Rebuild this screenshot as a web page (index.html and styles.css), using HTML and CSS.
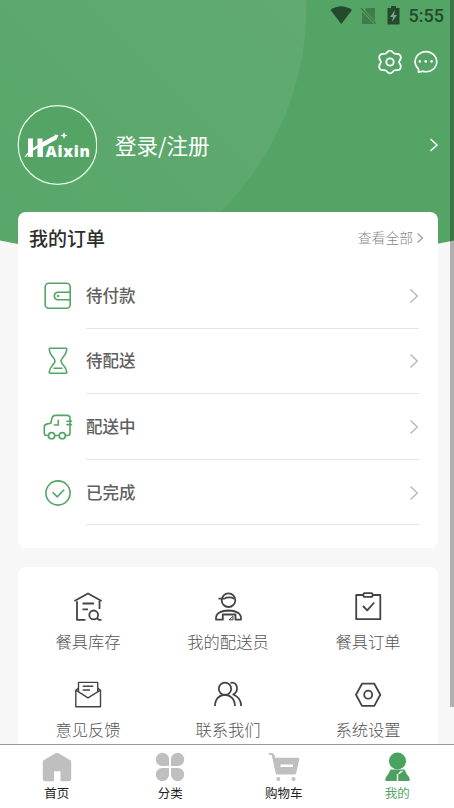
FILE: index.html
```html
<!DOCTYPE html>
<html lang="zh-CN">
<head>
<meta charset="utf-8">
<title>我的</title>
<link rel="stylesheet" href="styles.css">
</head>
<body>
<div class="screen">
  <svg class="backdrop" width="454" height="260" viewBox="0 0 454 260">
    <defs>
      <linearGradient id="glow" x1="0" y1="1" x2="1" y2="0"><stop offset="0.2" stop-color="#fff" stop-opacity="0.02"/><stop offset="1" stop-color="#fff" stop-opacity="0.1"/></linearGradient>
      <clipPath id="dome"><path d="M0 0H454V240.500Q227 290 0 240.500Z"/></clipPath>
    </defs>
    <g clip-path="url(#dome)">
      <rect width="454" height="260" fill="#54a465"/>
      <circle cx="17" cy="6" r="289.500" fill="url(#glow)"/>
    </g>
  </svg>
  <main class="content">
    <header class="status">
      <svg width="23" height="19" viewBox="0 0 23 19"><path d="M.5 4Q11 -3.500 22 4L11.300 18Z" fill="#24492d"/></svg>
      <svg class="sim" width="17" height="18" viewBox="0 0 17 18"><path d="M6 1H15V14L5 3ZM2 5L14 17H2Z" fill="#3d7d4b"/><path d="M1 1L16 17" stroke="#3d7d4b" stroke-width="1.400"/></svg>
      <svg class="battery" width="13" height="19" viewBox="0 0 13 19"><path d="M4 0H9V2H12.500V18.500H.5V2H4Z" fill="#24492d"/><path d="M8 4L3 11H6L5 16L10 9H7Z" fill="#6fae7c"/></svg>
      <span class="clock">5:55</span>
    </header>
    <div class="tools">
      <svg width="24" height="26" viewBox="0 0 24 26" fill="none" stroke="#fff" stroke-width="1.800" stroke-linejoin="round"><path d="M9.200 3.200Q12 .2 14.800 3.200Q16.200 5.200 18.600 4.800Q22.600 4.600 22.800 8.500Q22.800 10.400 21.600 11.500Q20.500 13 21.600 14.500Q22.800 15.600 22.800 17.500Q22.600 21.400 18.600 21.200Q16.200 20.800 14.800 22.800Q12 25.800 9.200 22.800Q7.800 20.800 5.400 21.200Q1.400 21.400 1.200 17.500Q1.200 15.600 2.400 14.500Q3.500 13 2.400 11.500Q1.200 10.400 1.200 8.500Q1.400 4.600 5.400 4.800Q7.800 5.200 9.200 3.200Z"/><circle cx="12" cy="13" r="3.700"/></svg>
      <svg width="25" height="24" viewBox="0 0 25 24" fill="none" stroke="#fff" stroke-width="1.600" stroke-linejoin="round"><path d="M5.500 22.300V19A10.800 10 0 1 1 10.200 21.400Q8 21.300 5.500 22.300Z"/><g fill="#fff" stroke="none"><circle cx="6.800" cy="11.400" r="1.300"/><circle cx="12.700" cy="11.400" r="1.300"/><circle cx="18.600" cy="11.400" r="1.300"/></g></svg>
    </div>
    <section class="account">
      <div class="avatar">
        <svg width="80" height="80" viewBox="0 0 80 80"><circle cx="40.500" cy="40" r="39.300" fill="#54a465" stroke="#e9ffea" stroke-width="1.200"/><g fill="#fff"><path d="M11 33.500H16V52H11ZM20.500 33.500H25.500V37L38 30.500L37 29.500L41.500 30L39.500 34.500L26 42V52H20.500V43Q13 47 9 52H7.500Q11 46 20.500 40Z"/><path d="M47 27L48 29.500L50.500 30.500L48 31.500L47 34L46 31.500L43.500 30.500L46 29.500Z"/></g><text class="brand" x="28.500" y="52" textLength="44.500" lengthAdjust="spacing">Aixin</text></svg>
      </div>
      <span class="login">登录/注册</span>
      <svg width="10" height="16" viewBox="0 0 10 16" fill="none" stroke="#fff" stroke-width="1.500"><path d="M1.500 2L8 8L1.500 14"/></svg>
    </section>
    <section class="card orders">
      <div class="heading"><h1>我的订单</h1><span class="all">查看全部</span><svg width="8" height="12" viewBox="0 0 8 12" fill="none" stroke="#999" stroke-width="1.200"><path d="M1.500 1.500L6.500 6L1.500 10.500"/></svg></div>
      <div class="row">
        <svg class="glyph" width="30" height="30" viewBox="0 0 30 30"><rect x="2.200" y="2.200" width="25" height="25" rx="3.500"/><path d="M27 11.300H14.500A3.800 3.800 0 0 0 14.500 18.800H27"/><circle cx="15" cy="15" r=".5"/></svg>
        <div class="line"><span>待付款</span><svg width="10" height="16" viewBox="0 0 10 16"><path d="M1.500 1.500L8.300 8L1.500 14.500"/></svg></div>
      </div>
      <div class="row">
        <svg class="glyph" width="30" height="30" viewBox="0 0 30 30"><path d="M7 2.300H23Q24 2.300 23.700 4C23.200 10 18 11.500 18 15C18 18.500 23.200 20 23.700 26Q24 27.200 23 27.200H7Q6 27.200 6.300 26C6.800 20 12 18.500 12 15C12 11.500 6.800 10 6.300 4Q6 2.300 7 2.300ZM11 22.200H19"/></svg>
        <div class="line"><span>待配送</span><svg width="10" height="16" viewBox="0 0 10 16"><path d="M1.500 1.500L8.300 8L1.500 14.500"/></svg></div>
      </div>
      <div class="row">
        <svg class="glyph" width="30" height="30" viewBox="0 0 30 30"><path d="M5.500 23.500H3.500Q1.300 23.500 1.300 21.300V15Q1.300 12.700 3.700 12.100L7.700 11.300L9 6Q9.900 3.400 12.400 3.400H24Q27 3.400 27 6.200V21Q27 23.500 24.700 23.500H22.400M11.800 23.500H16.200M15.300 8.200V13H11.500M24 9.300H28.500M24 12.600H28.500"/><circle cx="8.600" cy="23.700" r="3.100"/><circle cx="19.300" cy="23.700" r="3.100"/></svg>
        <div class="line"><span>配送中</span><svg width="10" height="16" viewBox="0 0 10 16"><path d="M1.500 1.500L8.300 8L1.500 14.500"/></svg></div>
      </div>
      <div class="row">
        <svg class="glyph" width="30" height="30" viewBox="0 0 30 30"><circle cx="15" cy="15" r="12.100"/><path d="M10 14.700L14.300 18.800L20.800 12"/></svg>
        <div class="line"><span>已完成</span><svg width="10" height="16" viewBox="0 0 10 16"><path d="M1.500 1.500L8.300 8L1.500 14.500"/></svg></div>
      </div>
    </section>
    <section class="card services">
      <div class="service"><svg width="30" height="30" viewBox="0 0 30 30"><path d="M12.500 27.800H4V9.200M1.400 9L15 1.500L28.600 9M26.500 9V17M9.500 11.500H21M9.500 17.300H15M23.800 26.300L26 27.800H28.500"/><circle cx="20.700" cy="22.900" r="4.400"/></svg><span>餐具库存</span></div>
      <div class="service"><svg width="30" height="30" viewBox="0 0 30 30"><circle cx="15.500" cy="8.200" r="6.800"/><path d="M5.500 6.700H11Q16 4 21.300 6.700M3 27.700Q2 19 15.500 18.500Q29 19 28 27.700H22.500V22.500H9.800V27.700Z"/><path stroke-width="1" d="M16 27.800L20 24.300V27.800Z"/></svg><span>我的配送员</span></div>
      <div class="service"><svg width="30" height="30" viewBox="0 0 30 30"><path d="M10.500 3H3.200V27.200H27.300V3H19.500M10 14L14.200 18.300L21.200 10.500"/><rect x="10.500" y="1.200" width="9" height="3.700" rx="1"/></svg><span>餐具订单</span></div>
      <div class="service"><svg class="thin" width="30" height="30" viewBox="0 0 30 30"><path d="M5.500 8L2.800 10.200V26.800H27.500V10.200L24.700 8M2.800 10.200L15 17.800L27.500 10.200M5.500 11.500V2.400H24.700V11.500M9.700 6.300H20.300M9.700 10H17"/></svg><span>意见反馈</span></div>
      <div class="service"><svg width="30" height="30" viewBox="0 0 30 30"><circle cx="12" cy="8.800" r="6.200"/><path d="M2 26C2 11 21.700 11 22 26M17.500 2.800C24.500 1.300 26.500 11 20.200 14.500Q28 17.300 28.200 26"/></svg><span>联系我们</span></div>
      <div class="service"><svg width="30" height="30" viewBox="0 0 30 30"><path d="M9 3.700H21.300L27.300 14.700L21.300 25.900H9L3 14.700Z"/><circle cx="15.200" cy="14.700" r="4"/></svg><span>系统设置</span></div>
    </section>
  </main>
  <nav class="tabs">
    <div class="tab"><svg width="30" height="30" viewBox="0 0 30 30"><path d="M13.500 1.300Q15 .4 16.500 1.300L28 8Q29.200 8.800 29.200 10V27Q29.200 29.300 27 29.300H18.500V19.300H12V29.300H3Q.8 29.300 .8 27V10Q.8 8.800 2 8Z"/></svg><span>首页</span></div>
    <div class="tab"><svg width="30" height="30" viewBox="0 0 30 30"><path d="M14 14H7A6.600 6.600 0 1 1 14 7ZM16 14V7A6.600 6.600 0 1 1 23 14ZM14 16V23A6.600 6.600 0 1 1 7 16ZM16 16H23A6.600 6.600 0 1 1 16 23Z"/></svg><span>分类</span></div>
    <div class="tab cart"><svg width="32" height="30" viewBox="0 0 32 30"><path fill-rule="evenodd" d="M.8 1H4Q6 1 6.700 3.500L7.200 5.800H30Q31.500 5.800 31.200 7.500L28.300 21Q27.900 22.500 26.300 22.500H9.500Q8 22.500 7.600 21L4 4.200Q3.800 2.800 2.500 2.800H.8ZM12.500 12.500V15H25V12.500Z"/><circle cx="10.300" cy="27" r="2"/><circle cx="25.500" cy="27" r="2"/></svg><span>购物车</span></div>
    <div class="tab active"><svg width="30" height="30" viewBox="0 0 30 30"><circle cx="15.500" cy="9" r="8.500"/><path d="M8 18L13.200 19.500L14.800 22V29H4.500Q2.700 29 3.200 27.300Q3.800 24.800 6 22.500Q7.500 20.500 8 18ZM23 18L17.800 19.500L16.200 22V29H26.500Q28.300 29 27.800 27.300Q27.200 24.800 25 22.500Q23.500 20.500 23 18ZM8 17.500H23L17.500 22H13.500Z"/></svg><span>我的</span></div>
  </nav>
  <div class="scrollbar"></div>
</div>
</body>
</html>
```
FILE: styles.css
```css
* { box-sizing: border-box; }
body { margin: 0; font-family: "Noto Sans CJK SC", sans-serif; color: #555; }
svg { display: block; flex: none; }
.screen { position: relative; width: 454px; height: 808px; overflow: hidden; display: flex; flex-direction: column; background: #f7f7f7; }
.backdrop { position: absolute; top: 0; left: 0; }
.content { position: relative; flex: 1; min-height: 0; overflow: hidden; }
.status { height: 31px; padding: 0 10px 0 0; display: flex; justify-content: flex-end; align-items: center; }
.sim { margin-left: 7px; }
.battery { margin-left: 10px; }
.clock { margin-left: 9px; font: 500 18px/20px Roboto, sans-serif; color: #24492d; }
.tools { height: 62px; padding-right: 16px; display: flex; justify-content: flex-end; align-items: center; gap: 11px; }
.account { height: 103px; padding: 0 15px 0 17px; display: flex; align-items: center; }
.brand { font: 800 15.500px "Open Sans", sans-serif; fill: #fff; }
.login { flex: 1; margin-left: 18px; font-size: 21.5px; line-height: 30px; color: #fff; }
.card { margin: 0 16px 0 18px; background: #fff; border-radius: 8px; }
.orders { height: 336px; margin-top: 16px; }
.heading { height: 51px; padding: 1px 14px 0 11px; display: flex; align-items: center; }
h1 { flex: 1; margin: 0; font-size: 19px; font-weight: 500; line-height: 26px; color: #2d2d2d; }
.all { margin: -2px 3px 0 0; font-size: 13.8px; font-weight: 300; color: #888; }
.row { height: 65.6px; padding-left: 25px; display: flex; align-items: center; }
.glyph { fill: none; stroke: #54a465; stroke-width: 1.600; stroke-linecap: round; stroke-linejoin: round; }
.line { flex: 1; height: 100%; margin: 0 19px 0 13px; padding-top: 1px; border-bottom: 1px solid #e5e5e5; display: flex; align-items: center; justify-content: space-between; font-size: 16.5px; font-weight: 500; color: #606060; }
.line span { margin-top: -2px; }
.line svg { fill: none; stroke: #bbb; stroke-width: 1.500; }
.services { height: 200px; margin-top: 19px; padding-top: 25px; display: grid; grid-template-columns: repeat(3, 140px); grid-auto-rows: 87.5px; }
.service { display: flex; flex-direction: column; align-items: center; font-size: 16.3px; font-weight: 300; line-height: 24px; }
.service span { margin-top: 7px; }
.service svg { fill: none; stroke: #444; stroke-width: 1.800; stroke-linejoin: round; }
.service .thin { stroke-width: 1.400; }
.tabs { position: relative; height: 64px; border-top: 1px solid #999; display: flex; background: #fff; }
.tab { flex: 1; padding-top: 7px; display: flex; flex-direction: column; align-items: center; font-size: 12.5px; line-height: 18px; color: #222; }
.tab span { margin-top: 2px; }
.tab svg { fill: #bfbfbf; }
.tab.active { color: #54a465; }
.tab.active svg { fill: #4ba260; }
.scrollbar { position: absolute; top: 0; right: 0; width: 4.500px; height: 707px; background: rgba(0, 0, 0, .29); }
```
